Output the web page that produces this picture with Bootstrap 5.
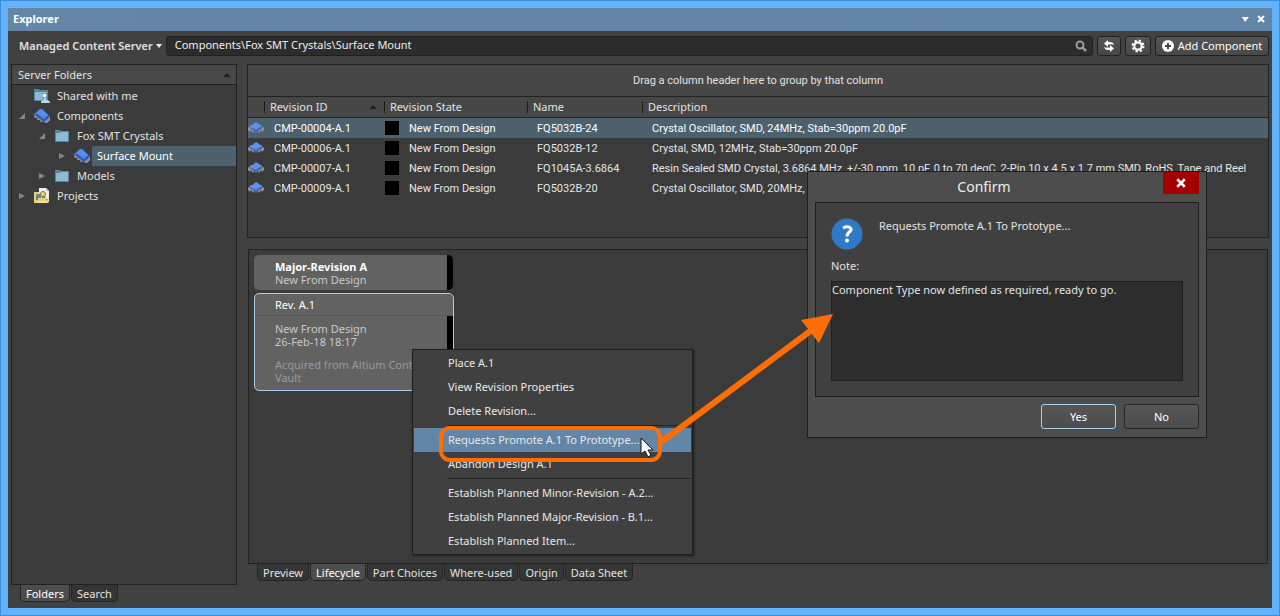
<!DOCTYPE html>
<html lang="en" data-bs-theme="dark">
<head>
<meta charset="utf-8">
<meta name="viewport" content="width=device-width, initial-scale=1">
<title>Explorer</title>
<link href="https://cdn.jsdelivr.net/npm/bootstrap@5.3.0/dist/css/bootstrap.min.css" rel="stylesheet">
<style>
  :root { --line: #222; --ink: #e2e2e2; --pick: #4d606e; --steel: #6385a6; --mark: #ff6d05; }
  body { font: 11px/20px "Noto Sans", "Open Sans", sans-serif; color: var(--ink); background: #414141; }
  button, input, textarea { font: inherit; color: inherit; }
  .app-window { min-height: 100vh; border: 8px solid #62b3fc; outline: 1px solid #3e8ed6; outline-offset: -1px; }
  .title-bar { height: 23px; padding: 0 3px 2px 5px; background: linear-gradient(90deg, #6486a7, #6185a6); color: #fff; }
  .plain-btn { border: 0; background: none; padding: 0; display: inline-flex; align-items: center; justify-content: center; }
  .tool-bar { height: 33px; padding: 5px 3px 9px 11px; }
  .server-btn { font-weight: 600; color: var(--ink); gap: 3px; }
  .path-box { height: 20px; background: #2c2c2c; border: 1px solid #202020; border-radius: 3px; }
  .path-box input { background: none; border: 0; outline: 0; padding: 0 8px 2px; height: 18px; min-width: 0; color: #eee; }
  .tool-btn { height: 20px; border: 1px solid #202020; border-radius: 3px; background: linear-gradient(#555, #484848); color: #fff; padding: 0; display: inline-flex; align-items: center; justify-content: center; }
  .w-refresh { width: 24px; }
  .w-gear { width: 26px; }
  .w-add { width: 114px; }
  .pane { border: 1px solid var(--line); background: #3b3b3b; }
  .side-col { flex: 0 0 226px; margin-left: 3px; }
  .main-col { margin: 0 3px 0 10px; min-width: 0; }
  .side-head { height: 20px; line-height: 19px; background: #484848; border-bottom: 1px solid var(--line); padding: 0 5px 0 6px; }
  .tree-list { padding-top: 1px; }
  .tree-row { height: 20px; }
  .tree-row.lv1 { padding-left: 20px; }
  .tree-row.lv2 { padding-left: 40px; }
  .tree-row .twist { flex: 0 0 20px; padding-left: 6px; }
  .tree-row svg { display: block; }
  .tree-row a { color: inherit; text-decoration: none; flex: 1; padding-left: 5px; }
  .tree-row .pic { flex: 0 0 20px; padding-left: 2px; }
  .tree-row a.picked { background: var(--pick); color: #fff; }
  .foot-tabs { gap: 1px; }
  .foot-tabs button { height: 17px; line-height: 15px; border: 1px solid #252525; border-top: 0; border-radius: 0 0 5px 5px; background: #353535; color: var(--ink); padding: 0 5px; }
  .foot-tabs button.on { background: #4d4d4d; color: #fff; }
  .side-tabs { margin: 0 0 6px 9px; }
  .main-tabs { margin: 0 0 27px 10px; }
  .group-bar { height: 32px; line-height: 31px; background: #474747; border-bottom: 1px solid var(--line); font-family: Roboto, sans-serif; }
  .parts-grid { table-layout: fixed; width: 100%; border-collapse: separate; border-spacing: 0; white-space: nowrap; }
  .parts-grid th { height: 21px; line-height: 20px; background: #474747; font-weight: 400; padding: 0 7px 0 6px; border-bottom: 1px solid var(--line); position: relative; }
  .parts-grid th + th::before { content: ""; position: absolute; left: 0; top: 4px; bottom: 4px; width: 1px; background: #1c1c1c; }
  .parts-grid td { height: 20px; line-height: 19px; padding: 1px 0 0 10px; font-family: Roboto, sans-serif; color: #e6e6e6; }
  .parts-grid td:first-child { padding: 0; }
  .parts-grid td:first-child svg { display: block; }
  .parts-grid tr.picked td { background: var(--pick); color: #fff; }
  .c-type { width: 16px; } .c-id { width: 120px; } .c-state { width: 143px; } .c-name { width: 115px; }
  .swatch { display: inline-block; width: 14px; height: 14px; background: #000; margin: -2px 10px 0 -9px; vertical-align: middle; }
  .grid-pane { height: 174px; }
  .cycle-pane { margin: 11px 1px 0 1px; padding: 5px; }
  .rev-card { width: 200px; line-height: 13px; background: #626262; color: #c9c9c9; }
  .rev-major { height: 35px; width: 199px; border-right: 6px solid #000; border-radius: 5px; padding: 5px 20px 0 21px; }
  .rev-item { height: 98px; margin-top: 3px; border: 1px solid #a9cdec; border-radius: 5px; overflow: hidden; }
  .rev-item header { height: 22px; line-height: 22px; padding-left: 20px; color: #fff; border-bottom: 1px solid #555; }
  .rev-body { height: 74px; border-right: 6px solid #000; padding: 6px 0 0 20px; }
  .rev-note { margin-top: 10px; color: #999; }
  .ctx-menu { position: absolute; left: 163px; top: 99px; width: 281px; padding: 1px; line-height: 24px; border: 1px solid #1e1e1e; background: #404040; box-shadow: 1px 1px 2px #1e1e1e; z-index: 2; }
  .ctx-menu button { display: block; width: 100%; height: 24px; border: 0; background: none; text-align: left; padding: 0 0 0 34px; color: #e8e8e8; }
  .ctx-menu button.hot { background: var(--steel); }
  .ctx-menu hr { margin: 2px 0 2px 34px; border: 0; border-top: 1px solid #222; opacity: 1; }
  .confirm-box { position: absolute; left: 799px; top: 107px; width: 400px; border: 1px solid #1e1e1e; background: #4d4d4d; z-index: 3; padding: 0 7px 8px; }
  .confirm-head { height: 30px; font-size: 14px; line-height: 30px; color: #eee; position: relative; padding-right: 46px; }
  .close-box { position: absolute; right: 0; top: 0; width: 36px; height: 22px; background: #a50000; }
  .confirm-body { border: 1px solid #1f1f1f; background: #404040; padding: 15px; }
  .confirm-text { line-height: 16px; }
  .confirm-body label { margin: 6px 0 5px; }
  .confirm-body textarea { display: block; width: 100%; height: 100px; resize: none; background: #2d2d2d; border: 1px solid #202020; padding: 0; line-height: 16px; outline: 0; }
  .confirm-foot { padding-top: 7px; }
  .confirm-foot button { width: 75px; height: 25px; border: 1px solid #262626; border-radius: 3px; background: linear-gradient(#565656, #4c4c4c); color: #fff; padding: 0; line-height: 22px; }
  .confirm-foot button.main { border-color: #a9cdec; }
  .callout { position: absolute; left: 0; top: 0; width: 1264px; height: 544px; pointer-events: none; z-index: 4; }
</style>
</head>
<body>
<svg width="0" height="0" class="position-absolute" aria-hidden="true">
  <symbol id="folder" viewBox="0 0 16 16"><path d="M1 2h5l1 1h8v11H1z" fill="#56869c"/><path d="M2 5h4l1-1h7v9H2z" fill="#8cb9d3"/></symbol>
  <symbol id="shared" viewBox="0 0 16 16"><path d="M0 1h5l1 1h8v11H0z" fill="#56869c"/><path d="M1 4h12v8H1z" fill="#8cb9d3"/><path d="M8 5h5v9H9z" fill="#5d8fb0"/><circle cx="10.500" cy="7.500" r="2" fill="#f2f7fa"/><path d="M7 15q0-3 3-3l0-2h2v2q4 0 4 3z" fill="#b9dcec"/></symbol>
  <symbol id="chip" viewBox="0 0 16 16"><path d="M0 6l4-3 12 6v3l-3 3h-2l-1-2-2 1-1-2-2 0-1-2H2z" fill="#8b93a3"/><path d="M1 6l5-5 2 0 7 6v3l-5 4-7-5z" fill="#2f5cb4"/><path d="M2 5l4-4h2l6 6-4 4z" fill="#568ceb"/><path d="M1 8v2M4 10v2M7 12v2M12 13v2M15 10v2" stroke="#8b93a3" stroke-width="1.500"/></symbol>
  <symbol id="part" viewBox="0 0 16 16"><path d="M0 8l3-3h10l3 3v2l-2 2-1-2-2 3-1-2-2 2-2-2-1 2-2-3-1 2-2-2z" fill="#8d8f99"/><path d="M2 7l6-5 6 4-6 5z" fill="#5b92ef"/><path d="M2 7l6 3 6-4v2l-6 4-6-4z" fill="#345fb7"/></symbol>
  <symbol id="projects" viewBox="0 0 16 16"><path d="M5 0h7l3 3v8H5z" fill="#f3f0e5"/><path d="M12 0l3 3h-3z" fill="#c3c3b8"/><path d="M0 4h5l1 1h6l1 9-1 1H0z" fill="#e8c982"/><path d="M15 5v9l-2 1H2l3-2h8z" fill="#f5dfa4"/><path d="M3 12V7h4M3 9h4M8 9h3" stroke="#3d7791" stroke-width="1.500" fill="none"/><circle cx="9" cy="6" r="2.500" fill="#f0d45d" stroke="#7a7a55"/></symbol>
  <symbol id="open" viewBox="0 0 8 8"><path d="M7 1v6H1z" fill="#858585"/></symbol>
  <symbol id="shut" viewBox="0 0 8 8"><path d="M1 1l6 3-6 3z" fill="#858585"/></symbol>
  <symbol id="cross" viewBox="0 0 8 8"><path d="M1 1l6 6M7 1l-6 6" stroke="#fff" stroke-width="2"/></symbol>
</svg>

<div class="app-window d-flex flex-column">
  <header class="title-bar d-flex align-items-center">
    <strong class="flex-grow-1">Explorer</strong>
    <button class="plain-btn me-2" aria-label="Window menu"><svg width="8" height="8"><path d="M1 2h7L4 7z" fill="#fff"/></svg></button>
    <button class="plain-btn me-1" aria-label="Close panel"><svg width="8" height="8"><use href="#cross"/></svg></button>
  </header>

  <div class="tool-bar d-flex align-items-center">
    <button class="plain-btn server-btn text-nowrap">Managed Content Server<svg width="6" height="4"><path d="M0 0h6L3 4z" fill="#eee"/></svg></button>
    <div class="path-box d-flex align-items-center flex-grow-1 ms-1">
      <input class="flex-grow-1" type="text" aria-label="Path" value="Components\Fox SMT Crystals\Surface Mount">
      <svg class="me-1" width="14" height="14" fill="none" stroke="#999"><circle cx="6" cy="6" r="3.500" stroke-width="2"/><path d="M8 8l4 4" stroke-width="2.500"/></svg>
    </div>
    <button class="tool-btn w-refresh ms-1" aria-label="Refresh"><svg width="12" height="12"><path d="M1 3.500L5 0v2h2q3 0 4 3Q9 4 7 4.500H5V7zM11 8.500L7 12v-2H5Q2 10 1 7q2 1 4 .500h2V5z" fill="#fff"/></svg></button>
    <button class="tool-btn w-gear ms-1" aria-label="Settings"><svg width="14" height="14"><circle cx="7" cy="7" r="5.500" fill="none" stroke="#fff" stroke-width="2" stroke-dasharray="2.300 2.020"/><circle cx="7" cy="7" r="3.700" fill="none" stroke="#fff" stroke-width="2.200"/></svg></button>
    <button class="tool-btn w-add ms-1 text-nowrap"><svg class="me-1" width="12" height="12"><circle cx="6" cy="6" r="6" fill="#fff"/><path d="M6 3v6M3 6h6" stroke="#484848" stroke-width="2"/></svg>Add Component</button>
  </div>

  <main class="d-flex flex-grow-1 position-relative">
    <aside class="side-col d-flex flex-column">
      <div class="pane flex-grow-1">
        <div class="side-head d-flex justify-content-between align-items-center"><span>Server Folders</span><svg width="8" height="4"><path d="M0 4l4-4 4 4z" fill="#202020"/></svg></div>
        <ul class="tree-list list-unstyled mb-0">
          <li class="tree-row d-flex align-items-center"><span class="twist"></span><span class="pic"><svg width="16" height="16"><use href="#shared"/></svg></span><a href="#">Shared with me</a></li>
          <li class="tree-row d-flex align-items-center"><span class="twist"><svg width="8" height="8"><use href="#open"/></svg></span><span class="pic"><svg width="16" height="16"><use href="#chip"/></svg></span><a href="#">Components</a></li>
          <li class="tree-row lv1 d-flex align-items-center"><span class="twist"><svg width="8" height="8"><use href="#open"/></svg></span><span class="pic"><svg width="16" height="16"><use href="#folder"/></svg></span><a href="#">Fox SMT Crystals</a></li>
          <li class="tree-row lv2 d-flex align-items-center"><span class="twist"><svg width="8" height="8"><use href="#shut"/></svg></span><span class="pic"><svg width="16" height="16"><use href="#chip"/></svg></span><a href="#" class="picked">Surface Mount</a></li>
          <li class="tree-row lv1 d-flex align-items-center"><span class="twist"><svg width="8" height="8"><use href="#shut"/></svg></span><span class="pic"><svg width="16" height="16"><use href="#folder"/></svg></span><a href="#">Models</a></li>
          <li class="tree-row d-flex align-items-center"><span class="twist"><svg width="8" height="8"><use href="#shut"/></svg></span><span class="pic"><svg width="16" height="16"><use href="#projects"/></svg></span><a href="#">Projects</a></li>
        </ul>
      </div>
      <nav class="foot-tabs side-tabs d-flex"><button class="on">Folders</button><button>Search</button></nav>
    </aside>

    <section class="main-col d-flex flex-column flex-grow-1">
      <div class="pane grid-pane overflow-hidden">
        <div class="group-bar text-center">Drag a column header here to group by that column</div>
        <table class="parts-grid">
          <colgroup><col class="c-type"><col class="c-id"><col class="c-state"><col class="c-name"><col></colgroup>
          <thead><tr><th aria-label="Type"></th><th><span class="d-flex justify-content-between align-items-center">Revision ID<svg width="8" height="4"><path d="M0 4l4-4 4 4z" fill="#202020"/></svg></span></th><th>Revision State</th><th>Name</th><th>Description</th></tr></thead>
          <tbody>
            <tr class="picked"><td><svg width="16" height="16"><use href="#part"/></svg></td><td>CMP-00004-A.1</td><td><span class="swatch"></span>New From Design</td><td>FQ5032B-24</td><td>Crystal Oscillator, SMD, 24MHz, Stab=30ppm 20.0pF</td></tr>
            <tr><td><svg width="16" height="16"><use href="#part"/></svg></td><td>CMP-00006-A.1</td><td><span class="swatch"></span>New From Design</td><td>FQ5032B-12</td><td>Crystal, SMD, 12MHz, Stab=30ppm 20.0pF</td></tr>
            <tr><td><svg width="16" height="16"><use href="#part"/></svg></td><td>CMP-00007-A.1</td><td><span class="swatch"></span>New From Design</td><td>FQ1045A-3.6864</td><td>Resin Sealed SMD Crystal, 3.6864 MHz, +/-30 ppm, 10 pF, 0 to 70 degC, 2-Pin 10 x 4.5 x 1.7 mm SMD, RoHS, Tape and Reel</td></tr>
            <tr><td><svg width="16" height="16"><use href="#part"/></svg></td><td>CMP-00009-A.1</td><td><span class="swatch"></span>New From Design</td><td>FQ5032B-20</td><td>Crystal Oscillator, SMD, 20MHz, Stab=30ppm 20.0pF</td></tr>
          </tbody>
        </table>
      </div>

      <div class="pane cycle-pane flex-grow-1 position-relative">
        <article class="rev-card rev-major"><strong class="d-block text-white">Major-Revision A</strong>New From Design</article>
        <article class="rev-card rev-item">
          <header>Rev. A.1</header>
          <div class="rev-body">New From Design<br>26-Feb-18 18:17<div class="rev-note">Acquired from Altium Content Vault</div></div>
        </article>
        <div class="ctx-menu">
          <button>Place A.1</button>
          <button>View Revision Properties</button>
          <button>Delete Revision...</button>
          <hr>
          <button class="hot">Requests Promote A.1 To Prototype...</button>
          <button>Abandon Design A.1</button>
          <hr>
          <button>Establish Planned Minor-Revision - A.2...</button>
          <button>Establish Planned Major-Revision - B.1...</button>
          <button>Establish Planned Item...</button>
        </div>
      </div>
      <nav class="foot-tabs main-tabs d-flex"><button>Preview</button><button class="on">Lifecycle</button><button>Part Choices</button><button>Where-used</button><button>Origin</button><button>Data Sheet</button></nav>
    </section>

    <div class="confirm-box" role="dialog" aria-labelledby="confirm-title">
      <div class="confirm-head text-center"><span id="confirm-title">Confirm</span><button class="plain-btn close-box" aria-label="Close"><svg width="10" height="10"><use href="#cross"/></svg></button></div>
      <div class="confirm-body">
        <div class="d-flex gap-3">
          <svg width="32" height="32"><circle cx="16" cy="16" r="15.500" fill="#3079c6"/><path d="M12 10q4-2 7-.500 2 2 0 4-3 2-3 5" fill="none" stroke="#fff" stroke-width="3"/><circle cx="16" cy="22.500" r="2" fill="#fff"/></svg>
          <div class="confirm-text">Requests Promote A.1 To Prototype...</div>
        </div>
        <label class="d-block" for="note">Note:</label>
        <textarea id="note">Component Type now defined as required, ready to go.</textarea>
      </div>
      <div class="confirm-foot d-flex justify-content-end gap-2"><button class="main">Yes</button><button>No</button></div>
    </div>

    <svg class="callout" aria-hidden="true">
      <rect x="433" y="364" width="219" height="32" rx="9" fill="none" stroke="#ff6d05" stroke-width="4"/>
      <path d="M652 379L805 265" stroke="#ff6d05" stroke-width="6"/>
      <path d="M825 250L793 256L811 279z" fill="#ff6d05"/>
      <path d="M633 374v16l4-3 3 6 3-2-3-5h5z" fill="#fff" stroke="#111"/>
    </svg>
  </main>
</div>
<script src="https://cdn.jsdelivr.net/npm/bootstrap@5.3.0/dist/js/bootstrap.bundle.min.js"></script>
</body>
</html>
